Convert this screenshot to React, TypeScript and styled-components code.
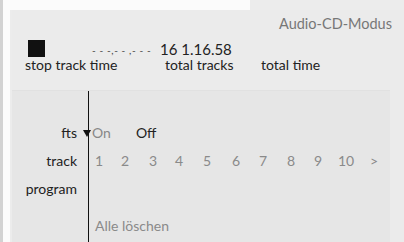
import React from "react";
import styled, { createGlobalStyle } from "styled-components";

const GlobalStyle = createGlobalStyle`
  html, body {
    margin: 0;
    padding: 0;
    background: #ececec;
  }
  body {
    font-family: Lato, "Open Sans", sans-serif;
  }
`;

const Page = styled.div`
  display: flex;
  width: 404px;
  height: 242px;
  overflow: hidden;
  background: #ececec;
`;

const LeftRail = styled.div`
  width: 3px;
  background: #d2d2d2;
  border-right: 7px solid #fbfbfb;
  flex-shrink: 0;
`;

const Main = styled.div`
  flex: 1;
  display: flex;
  flex-direction: column;
`;

const TopStrip = styled.div`
  height: 10px;
  width: 240px;
  background: #fbfbfb;
  flex-shrink: 0;
`;

const Panel = styled.div`
  flex: 1;
  display: flex;
  flex-direction: column;
  background: #ebebeb;
  margin-left: 2px;
`;

const Header = styled.div`
  height: 80px;
  flex-shrink: 0;
  padding: 0 12px 0 13px;
  box-sizing: border-box;
`;

const ModeLabel = styled.div`
  text-align: right;
  font-size: 14.5px;
  line-height: 17px;
  color: #777;
  padding-top: 5px;
`;

const StatusGrid = styled.div`
  display: grid;
  grid-template-columns: 67px 68px 101px 1fr;
  grid-template-rows: 17px 15px;
  margin-top: 8px;
  align-items: center;
`;

const StopSquare = styled.div`
  width: 17px;
  height: 17px;
  background: #111;
  margin-left: 3px;
`;

const Dashes = styled.div`
  font-size: 10px;
  color: #444;
  letter-spacing: 0.6px;
  white-space: nowrap;
  padding-top: 3px;
`;

const Value = styled.div`
  font-size: 15px;
  color: #222;
  white-space: nowrap;
`;

const Caption = styled.div<{ $span?: number; $indent?: number }>`
  grid-column: span ${(p) => p.$span ?? 1};
  padding-left: ${(p) => p.$indent ?? 0}px;
  font-size: 14px;
  color: #222;
  line-height: 15px;
  white-space: nowrap;
`;

const Body = styled.div`
  flex: 1;
  display: grid;
  grid-template-columns: 76px 1fr;
  grid-template-rows: 27px 28px 28px 28px 46px 1fr;
  background: #e6e6e6;
  border-top: 1px solid #e1e1e1;
  margin-right: 14px;
`;

const RowLabel = styled.div`
  font-size: 14px;
  color: #222;
  text-align: right;
  align-self: center;
  padding-right: 11px;
`;

const Cell = styled.div`
  border-left: 1px solid #111;
  display: flex;
  align-items: center;
  padding-left: 6px;
  font-size: 14px;
  position: relative;
`;

const Pointer = styled.span`
  position: absolute;
  left: -6px;
  top: 50%;
  margin-top: -2px;
  width: 0;
  height: 0;
  border-left: 4.5px solid transparent;
  border-right: 4.5px solid transparent;
  border-top: 7px solid #111;
`;

const Option = styled.span<{ $active?: boolean }>`
  color: ${(p) => (p.$active ? "#222" : "#888")};
  margin-right: 25px;
  margin-left: ${(p) => (p.$active ? 0 : -3)}px;
`;

const TrackNum = styled.span<{ $w: number }>`
  color: #8a8a8a;
  width: ${(p) => p.$w}px;
  flex-shrink: 0;
  font-size: 14px;
`;

const ClearLink = styled.span`
  color: #8a8a8a;
  font-size: 14px;
`;

const tracks = ["1", "2", "3", "4", "5", "6", "7", "8", "9", "10", ">"];
const widths = [26, 28, 26, 28, 29, 27, 28, 27, 24, 32, 14];

export default function App() {
  return (
    <Page>
      <GlobalStyle />
      <LeftRail />
      <Main>
        <TopStrip />
        <Panel>
          <Header>
            <ModeLabel>Audio-CD-Modus</ModeLabel>
            <StatusGrid>
              <StopSquare />
              <Dashes>- - -,- - ,- - -</Dashes>
              <Value>16 1.16.58</Value>
              <div />
              <Caption $span={2}>stop track time</Caption>
              <Caption $indent={5}>total tracks</Caption>
              <Caption>total time</Caption>
            </StatusGrid>
          </Header>
          <Body>
            <div />
            <Cell />
            <RowLabel>fts</RowLabel>
            <Cell>
              <Pointer />
              <Option>On</Option>
              <Option $active>Off</Option>
            </Cell>
            <RowLabel>track</RowLabel>
            <Cell>
              {tracks.map((t, i) => (
                <TrackNum key={t} $w={widths[i]}>
                  {t}
                </TrackNum>
              ))}
            </Cell>
            <RowLabel>program</RowLabel>
            <Cell />
            <div />
            <Cell>
              <ClearLink>Alle löschen</ClearLink>
            </Cell>
            <div />
            <Cell />
          </Body>
        </Panel>
      </Main>
    </Page>
  );
}
